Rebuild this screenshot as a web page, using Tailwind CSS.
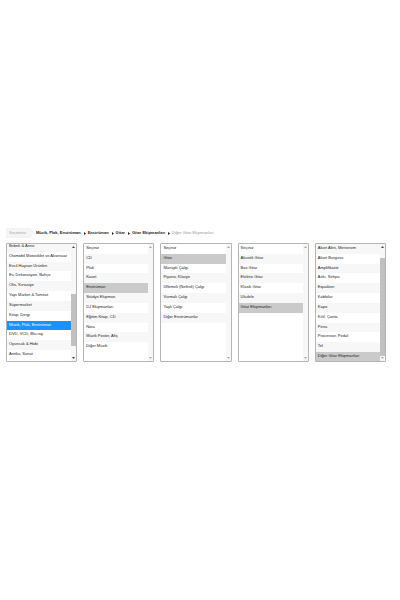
<!DOCTYPE html>
<html lang="tr">
<head>
  <meta charset="UTF-8" />
  <meta name="viewport" content="width=device-width, initial-scale=1.0"/>
  <title>Kategori Seçimi</title>
  <script src="https://cdn.jsdelivr.net/npm/@tailwindcss/browser@4"></script>
</head>
<body class="bg-white text-[#222] font-['Liberation_Sans',Arial,sans-serif] text-[4px] leading-[10px] min-h-screen flex flex-col justify-center">
  <main class="pl-[6px] pr-[14px] pb-[10px]">
    <nav aria-label="Kategori yolu" class="flex items-center h-[10px] mb-[5px] whitespace-nowrap font-bold">
      <span class="relative w-[30px] h-[10px] pl-[3px] text-[#aaa] font-normal">
        <svg class="absolute inset-0 -z-10 w-[28px] h-[10px]" viewBox="0 0 28 10" aria-hidden="true"><path d="M0 0H24L27.500 5L24 10H0Z" fill="#f5f5f5" stroke="#ececec" stroke-width=".5"/></svg>
        Seçiminiz
      </span>
      <a href="#muzik">Müzik, Plak, Enstrüman</a>
      <svg class="w-[2px] h-[3px] ml-[3px] mr-[2px]" viewBox="0 0 2 3" aria-hidden="true"><path d="M0 0L2 1.500L0 3Z" fill="#222"/></svg>
      <a href="#enstruman">Enstrüman</a>
      <svg class="w-[2px] h-[3px] ml-[3px] mr-[2px]" viewBox="0 0 2 3" aria-hidden="true"><path d="M0 0L2 1.500L0 3Z" fill="#222"/></svg>
      <a href="#gitar">Gitar</a>
      <svg class="w-[2px] h-[3px] ml-[3px] mr-[2px]" viewBox="0 0 2 3" aria-hidden="true"><path d="M0 0L2 1.500L0 3Z" fill="#222"/></svg>
      <a href="#ekipman">Gitar Ekipmanları</a>
      <svg class="w-[2px] h-[3px] ml-[3px] mr-[2px]" viewBox="0 0 2 3" aria-hidden="true"><path d="M0 0L2 1.500L0 3Z" fill="#222"/></svg>
      <span class="text-[#999] font-normal">Diğer Gitar Ekipmanları</span>
    </nav>

    <div id="lists" class="grid grid-cols-5 gap-[6px]"></div>
  </main>

  <script>
    // thumb: [top, height] of the scrollbar handle, in percent of the list
    const lists = [
      { label: "Ana kategori", selected: 8, color: "bg-[#1e90ff] text-white", odd: true, scrolled: true, thumb: [43, 44], down: "#444",
        items: ["Bebek & Anne", "Otomobil Motosiklet ve Aksesuar", "Evcil Hayvan Ürünleri", "Ev, Dekorasyon, Bahçe", "Ofis, Kırtasiye", "Yapı Market & Tamirat", "Süpermarket", "Kitap, Dergi", "Müzik, Plak, Enstrüman", "DVD, VCD, Blu-ray", "Oyuncak & Hobi", "Antika, Sanat"] },
      { label: "Müzik", selected: 4,
        items: ["Seçiniz", "CD", "Plak", "Kaset", "Enstrüman", "Stüdyo Ekipman", "DJ Ekipmanları", "Eğitim Kitap, CD", "Nota", "Müzik Poster, Afiş", "Diğer Müzik"] },
      { label: "Enstrüman", selected: 1,
        items: ["Seçiniz", "Gitar", "Mızraplı Çalgı", "Piyano, Klavye", "Üflemeli (Nefesli) Çalgı", "Vurmalı Çalgı", "Yaylı Çalgı", "Diğer Enstrümanlar"] },
      { label: "Gitar", selected: 6,
        items: ["Seçiniz", "Akustik Gitar", "Bas Gitar", "Elektro Gitar", "Klasik Gitar", "Ukulele", "Gitar Ekipmanları"] },
      { label: "Gitar Ekipmanları", selected: 11, odd: true, thumb: [12, 84],
        items: ["Akort Aleti, Metronom", "Akort Burgusu", "Amplifikatör", "Askı, Sehpa", "Equalizer", "Kablolar", "Kapo", "Kılıf, Çanta", "Pena", "Processor, Pedal", "Tel", "Diğer Gitar Ekipmanları"] }
    ];

    document.getElementById("lists").innerHTML = lists.map(list => `
      <div class="flex h-[119px] border border-[#b5b5b5] rounded-[1px] overflow-hidden">
        <select size="12" aria-label="${list.label}" class="block flex-1 min-w-0 h-[118px] ${list.scrolled ? '-mt-[2px]' : ''} p-0 border-0 appearance-none overflow-hidden outline-none bg-white text-[4px] leading-[10px]">
          ${list.items.map((item, i) => `<option class="block h-[calc(100%/12)] min-h-0 p-0 pt-[1px] pl-[2px] text-[4px] leading-[10px] overflow-hidden ${i === list.selected ? (list.color || 'bg-[#cacaca]') : i % 2 === (list.odd ? 0 : 1) ? 'bg-[#f7f7f7]' : 'bg-white'}">${item}</option>`).join('')}
        </select>
        <div class="relative w-[5px] bg-[#f7f7f7] flex flex-col justify-between items-center py-[2px]" aria-hidden="true">
          <svg class="w-[3px] h-[2px]" viewBox="0 0 3 2"><path d="M0 2L1.500 0L3 2Z" fill="${list.thumb ? '#444' : '#aaa'}"/></svg>
          ${list.thumb ? `<span class="absolute inset-x-0 bg-[#c1c1c1]" style="top:${list.thumb[0]}%;height:${list.thumb[1]}%"></span>` : ''}
          <svg class="w-[3px] h-[2px]" viewBox="0 0 3 2"><path d="M0 0L1.500 2L3 0Z" fill="${list.down || '#aaa'}"/></svg>
        </div>
      </div>
    `).join('');
  </script>
</body>
</html>
